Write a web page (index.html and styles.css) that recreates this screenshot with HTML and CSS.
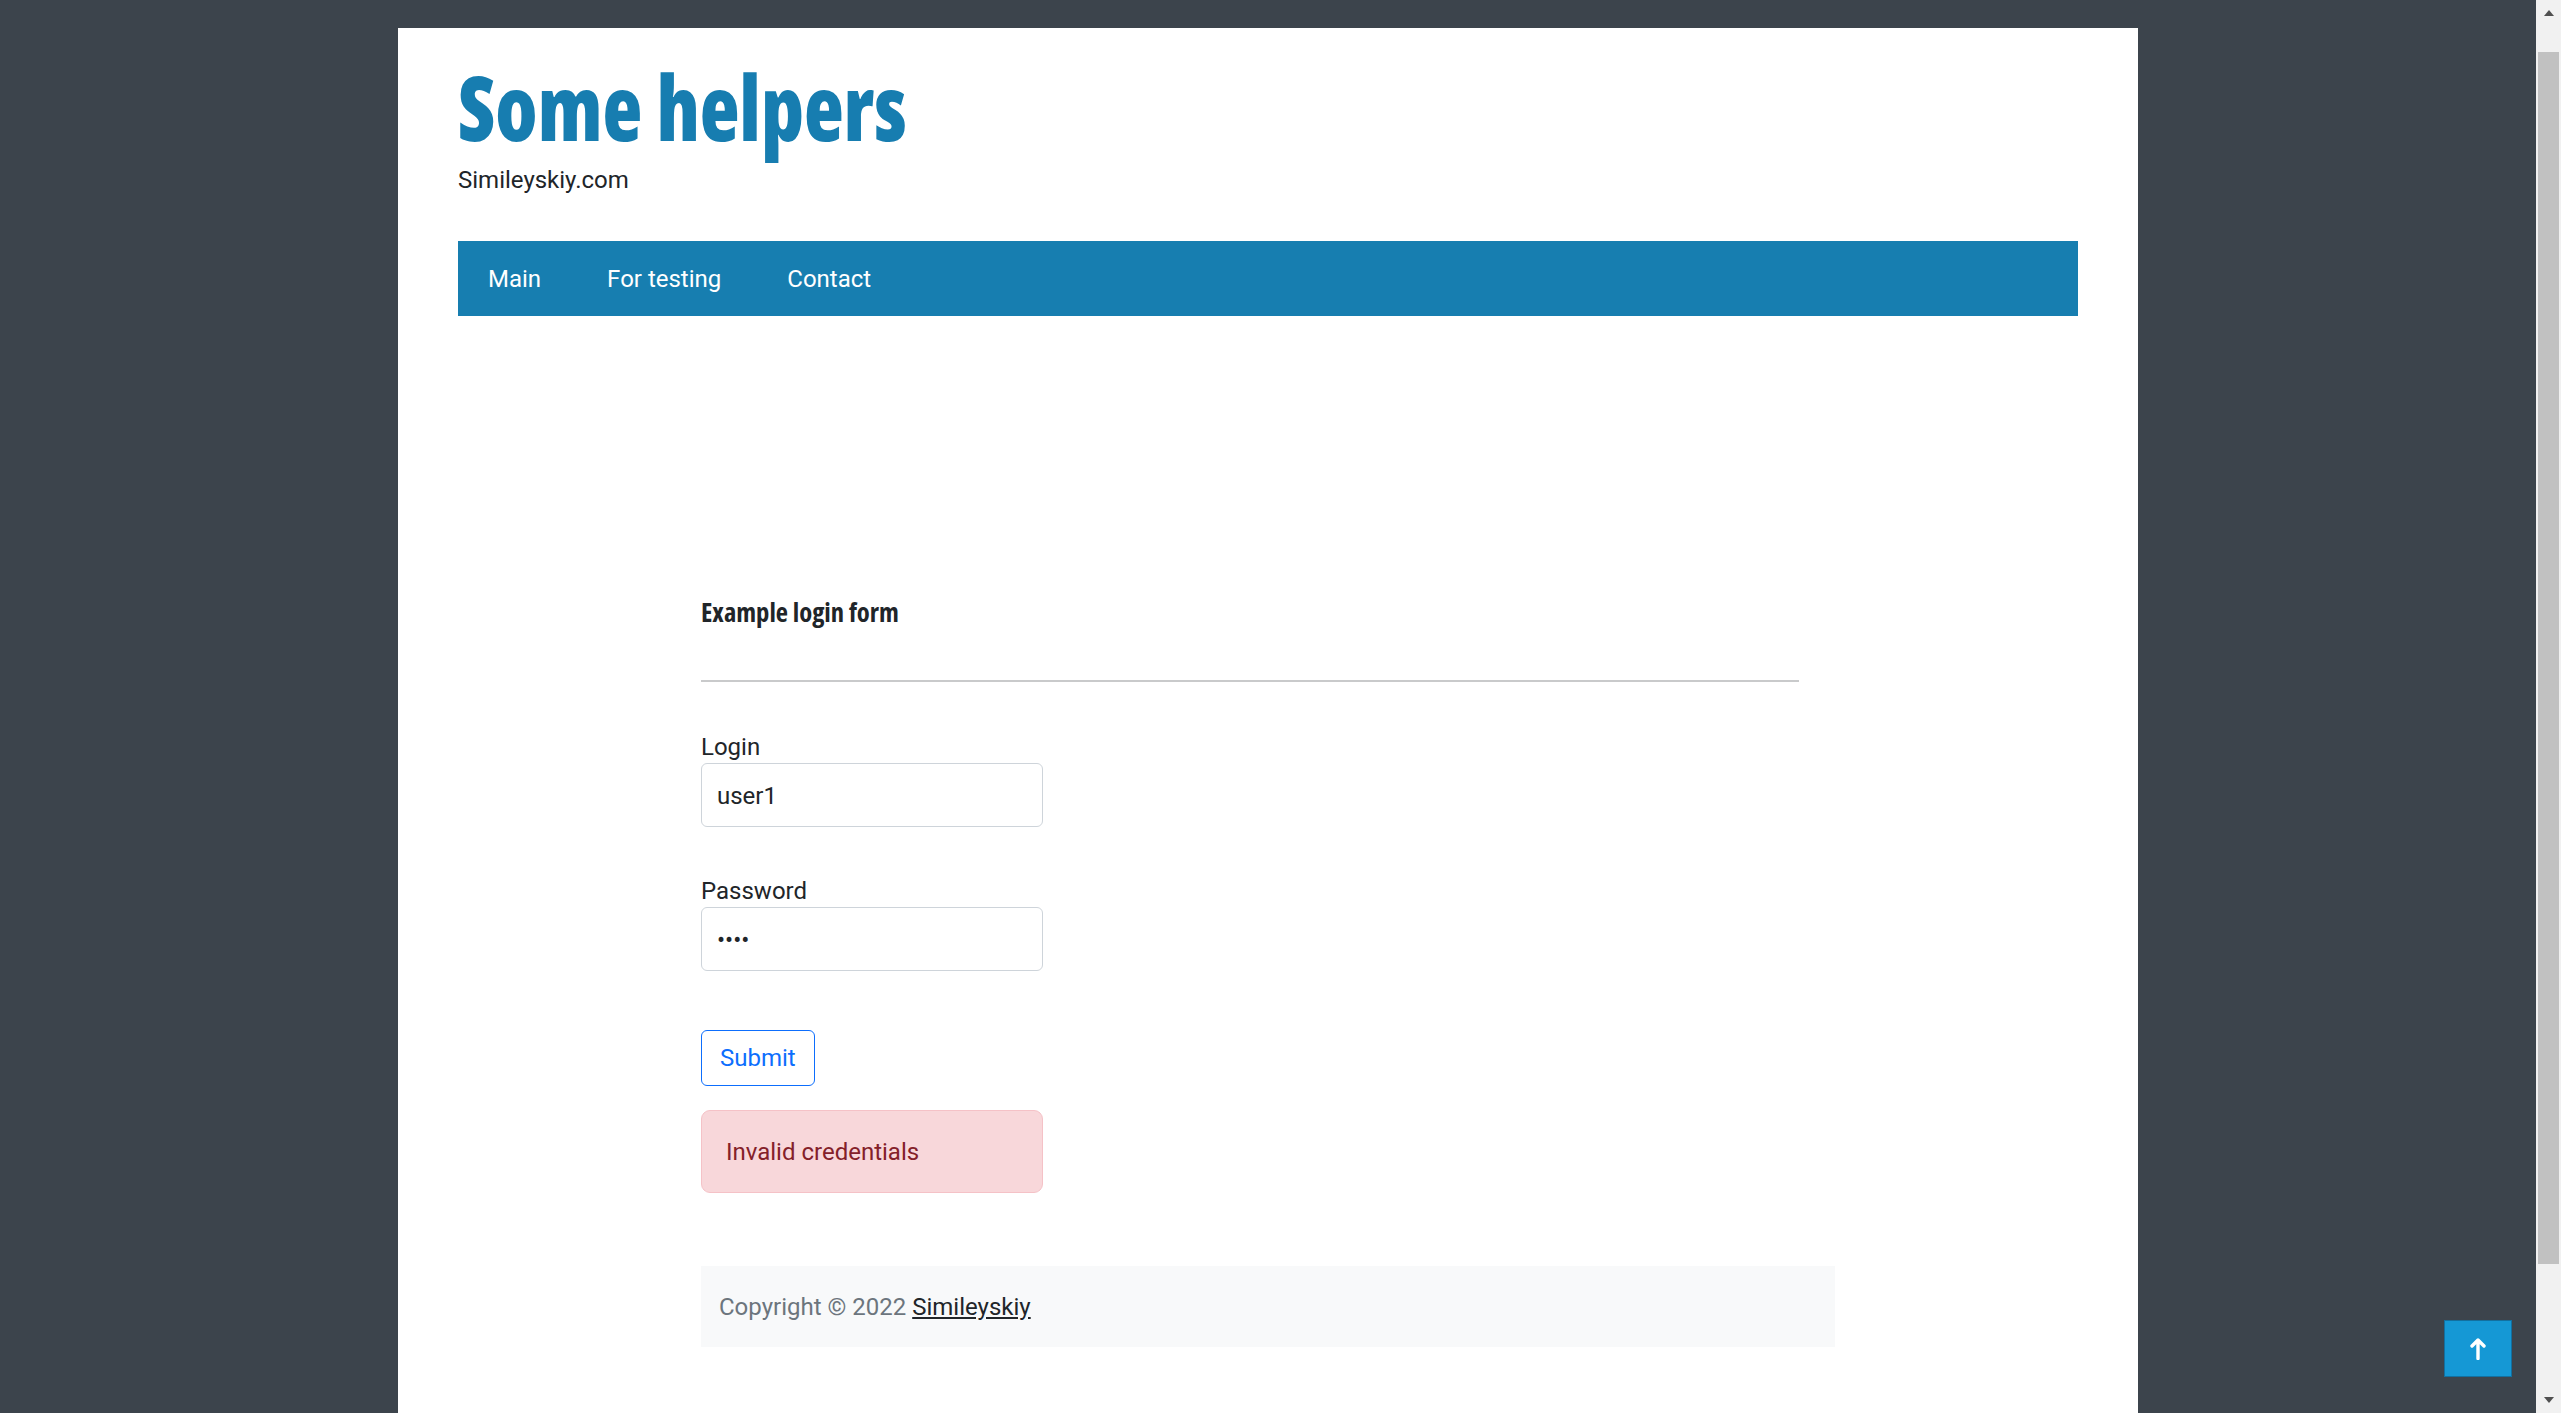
FILE: index.html
```html
<!DOCTYPE html>
<html lang="en">
<head>
<meta charset="utf-8">
<title>Some helpers</title>
<link rel="stylesheet" href="styles.css">
</head>
<body>
<div class="page">
  <header class="site-header">
    <h1 class="site-title"><a href="#">Some helpers</a></h1>
    <p class="site-desc">Simileyskiy.com</p>
  </header>
  <nav class="main-nav">
    <a href="#">Main</a>
    <a href="#">For testing</a>
    <a href="#">Contact</a>
  </nav>
  <main class="content">
    <h2 class="form-title">Example login form</h2>
    <hr class="divider">
    <form class="login-form">
      <div class="field">
        <label for="login">Login</label>
        <input id="login" type="text" value="user1">
      </div>
      <div class="field">
        <label for="password">Password</label>
        <input id="password" type="password" value="1234">
      </div>
      <button type="button" class="btn-submit">Submit</button>
      <div class="alert">Invalid credentials</div>
    </form>
    <footer class="site-footer">Copyright © 2022 <a href="#">Simileyskiy</a></footer>
  </main>
</div>
<a href="#" class="to-top" aria-label="Back to top">
  <svg width="16" height="23" viewBox="0 0 16 23"><path d="M8 21.5V3M2 9L8 3L14 9" fill="none" stroke="#fff" stroke-width="3.4" stroke-linecap="round" stroke-linejoin="round"/></svg>
</a>
<div class="scrollbar" aria-hidden="true">
  <div class="sb-btn"><span class="sb-arrow-up"></span></div>
  <div class="sb-track"><div class="sb-thumb"></div></div>
  <div class="sb-btn"><span class="sb-arrow-down"></span></div>
</div>
</body>
</html>
```
FILE: styles.css
```css
* { box-sizing: border-box; }

body {
  margin: 0;
  padding-right: 25px;
  background: #3c444c;
  font-family: Roboto, "Liberation Sans", sans-serif;
  font-size: 24px;
  color: #212529;
}

.page {
  width: 1740px;
  margin: 28px auto 0;
  background: #fff;
  padding: 33px 0 242px;
}

.site-header { margin: 0 60px; }

.site-title {
  margin: 0;
  font-family: "Open Sans", "DejaVu Sans", sans-serif;
  font-weight: 800;
  font-stretch: 75%;
  font-size: 90px;
  line-height: 90px;
}
.site-title a {
  color: #177db0;
  text-decoration: none;
  display: inline-block;
  transform: scaleX(0.912);
  transform-origin: 0 50%;
}

.site-desc {
  margin: 14px 0 0;
  font-size: 24px;
  line-height: 30px;
}

.main-nav {
  margin: 46px 60px 0;
  height: 75px;
  background: #177eb0;
  display: flex;
  gap: 6px;
}
.main-nav a {
  color: #fff;
  text-decoration: none;
  padding: 1px 30px 0;
  font-size: 24px;
  line-height: 74px;
}

.content { width: 1134px; margin: 281px auto 0; }

.form-title {
  margin: 0;
  font-family: "Open Sans", "DejaVu Sans", sans-serif;
  font-weight: 700;
  font-stretch: 75%;
  font-size: 26.6px;
  line-height: 30px;
  color: #212529;
}

.divider {
  width: 1098px;
  margin: 53px 0 0;
  border: 0;
  height: 2px;
  background: #c9cacb;
}

.login-form { display: flex; flex-direction: column; align-items: flex-start; }

.field { display: flex; flex-direction: column; margin-top: 50px; }
.field + .field { margin-top: 49px; }
.field label { line-height: 30px; margin-bottom: 1px; }
.field input {
  width: 342px;
  height: 64px;
  border: 1px solid #ced4da;
  border-radius: 6px;
  padding: 2px 15px 0;
  font-family: Roboto, sans-serif;
  font-size: 24px;
  color: #212529;
  background: #fff;
}

.btn-submit {
  margin-top: 59px;
  height: 56px;
  padding: 0 18px;
  border: 1px solid #0d6efd;
  border-radius: 6px;
  background: #fff;
  color: #0d6efd;
  font-family: Roboto, sans-serif;
  font-size: 24px;
  line-height: 36px;
}

.alert {
  margin-top: 24px;
  width: 342px;
  padding: 22.5px 24px;
  background: #f8d7da;
  border: 1px solid #f5c2c7;
  border-radius: 9px;
  color: #842029;
  line-height: 36px;
}

.site-footer {
  margin-top: 73px;
  background: #f8f9fa;
  padding: 22.5px 18px;
  line-height: 36px;
  color: #6c757d;
}
.site-footer a { color: #212529; }

.to-top {
  position: fixed;
  right: 49px;
  bottom: 36px;
  width: 68px;
  height: 57px;
  background: #1598d5;
  border: 1px solid #1270a0;
  display: flex;
  align-items: center;
  justify-content: center;
}
.to-top svg { display: block; }

.scrollbar {
  position: fixed;
  top: 0;
  right: 0;
  bottom: 0;
  width: 25px;
  background: #f1f1f1;
  display: flex;
  flex-direction: column;
}
.sb-btn {
  height: 25px;
  display: flex;
  justify-content: center;
}
.sb-btn:first-child { align-items: flex-start; padding-top: 10px; }
.sb-btn:last-child { align-items: flex-end; padding-bottom: 10px; }
.sb-arrow-up, .sb-arrow-down {
  width: 0;
  height: 0;
  border-left: 5.5px solid transparent;
  border-right: 5.5px solid transparent;
}
.sb-arrow-up { border-bottom: 6px solid #505050; }
.sb-arrow-down { border-top: 6px solid #505050; }
.sb-track { flex: 1; padding: 27px 2px 124px; }
.sb-thumb { height: 100%; background: #c1c1c1; }
```
